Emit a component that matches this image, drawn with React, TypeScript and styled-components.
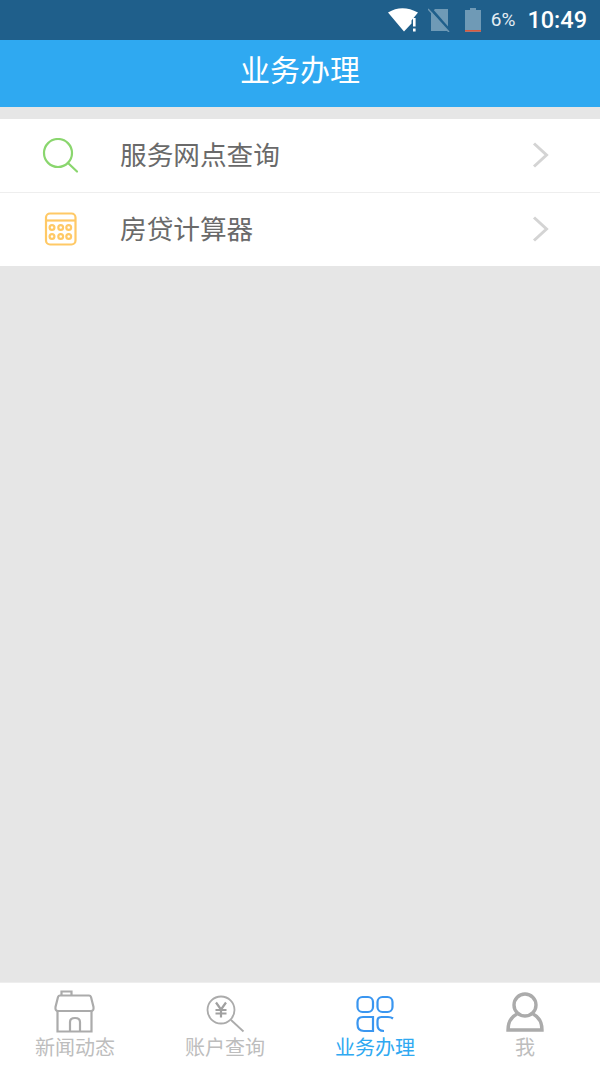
import React from "react";
import styled, { createGlobalStyle } from "styled-components";

const Global = createGlobalStyle`
  html, body { margin: 0; padding: 0; height: 100%; }
  #root { height: 100%; }
  * { box-sizing: border-box; }
`;

const Page = styled.div`
  width: 600px;
  height: 1067px;
  display: flex;
  flex-direction: column;
  background: #e6e6e6;
  font-family: "Noto Sans CJK SC", "Liberation Sans", sans-serif;
  overflow: hidden;
`;

const StatusBar = styled.div`
  height: 40px;
  flex: none;
  background: #1f5f8b;
  display: flex;
  align-items: center;
  justify-content: flex-end;
  padding-right: 13px;
  color: #fff;
  font-family: Roboto, "Liberation Sans", sans-serif;
`;

const StatusIcon = styled.svg<{ $mr: number }>`
  display: block;
  margin-right: ${(p) => p.$mr}px;
  flex: none;
`;

const Percent = styled.span`
  font-size: 19px;
  color: #e4edf3;
  margin-right: 12px;
  line-height: 42px;
`;

const Clock = styled.span`
  font-size: 23.5px;
  font-weight: 500;
  line-height: 42px;
`;

const TitleBar = styled.header`
  height: 67px;
  flex: none;
  background: #2fa9f1;
  display: flex;
  align-items: center;
  justify-content: center;
  color: #fff;
  font-size: 30px;
  line-height: 44px;
  padding-bottom: 12px;
`;

const List = styled.div`
  margin-top: 12px;
  background: #fff;
  flex: none;
`;

const Row = styled.div<{ $h: number; $divider?: boolean }>`
  height: ${(p) => p.$h}px;
  display: flex;
  align-items: center;
  padding-left: 41px;
  padding-right: 50px;
  border-bottom: ${(p) => (p.$divider ? "1px solid #eeeeee" : "none")};
`;

const RowIcon = styled.div`
  width: 79px;
  flex: none;
  display: flex;
  align-items: center;
`;

const RowLabel = styled.span`
  flex: 1;
  font-size: 26.67px;
  color: #6a6a6a;
  line-height: 40px;
  padding-bottom: 4px;
`;

const Spacer = styled.div`
  flex: 1;
`;

const TabBar = styled.nav`
  height: 85px;
  flex: none;
  background: #fff;
  display: grid;
  grid-template-columns: repeat(4, 150px);
  border-top: 1px solid #eeeeee;
`;

const Tab = styled.div<{ $active?: boolean }>`
  display: flex;
  flex-direction: column;
  align-items: center;
  color: ${(p) => (p.$active ? "#2fa9f1" : "#bdbdbd")};
  font-size: 20px;
`;

const TabIconBox = styled.svg`
  display: block;
  flex: none;
  margin-top: 7px;
`;

const TabLabel = styled.span`
  line-height: 26px;
`;

const Chevron = () => (
  <svg width="18" height="28" viewBox="0 0 18 28" fill="none" style={{ marginBottom: 2 }}>
    <path d="M2 2.5 L14.5 14 L2 25.5" stroke="#d4d4d4" strokeWidth="3" />
  </svg>
);

export default function App() {
  return (
    <Page>
      <Global />
      <StatusBar>
        <StatusIcon $mr={10} width="30" height="24" viewBox="0 0 30 24">
          <path d="M0 4.5 Q14 -4 30 4.5 L23.5 12.5 V15.5 L16 23.5 Z" fill="#fff" />
          <rect x="25" y="10" width="2.6" height="8.5" fill="#fff" />
          <rect x="25" y="20.5" width="2.6" height="3" fill="#fff" />
        </StatusIcon>
        <StatusIcon $mr={15} width="22" height="24" viewBox="0 0 22 24">
          <path d="M3 5 L7 1 H20 V23 H3 Z" fill="#6f9ab6" />
          <path d="M2 0 L22 23" stroke="#1f5f8b" strokeWidth="3" />
          <path d="M0 1 L21 24" stroke="#6f9ab6" strokeWidth="1.5" />
        </StatusIcon>
        <StatusIcon $mr={10} width="16" height="24" viewBox="0 0 16 24">
          <path d="M5 0 H11 V2 H16 V24 H0 V2 H5 Z" fill="#6f9ab6" />
          <rect x="0" y="22" width="16" height="1.6" fill="#d9593d" />
        </StatusIcon>
        <Percent>6%</Percent>
        <Clock>10:49</Clock>
      </StatusBar>
      <TitleBar>业务办理</TitleBar>
      <List>
        <Row $h={74} $divider>
          <RowIcon>
            <svg width="38" height="36" viewBox="0 0 38 36" fill="none" stroke="#8ad66e" strokeWidth="2.2">
              <circle cx="17" cy="15" r="14" />
              <path d="M27 25 L36 33.5" strokeLinecap="round" />
            </svg>
          </RowIcon>
          <RowLabel>服务网点查询</RowLabel>
          <Chevron />
        </Row>
        <Row $h={73}>
          <RowIcon>
            <svg width="36" height="36" viewBox="0 0 36 36" fill="none" stroke="#ffc966" strokeWidth="2.2">
              <rect x="5" y="1.5" width="29.5" height="31" rx="4" />
              <path d="M5 8.5 H34.5" />
              <circle cx="11" cy="15.5" r="2.4" />
              <circle cx="19.7" cy="15.5" r="2.4" />
              <circle cx="27.7" cy="15.5" r="2.4" />
              <circle cx="11" cy="24.5" r="2.4" />
              <circle cx="19.7" cy="24.5" r="2.4" />
              <circle cx="27.7" cy="24.5" r="2.4" />
            </svg>
          </RowIcon>
          <RowLabel>房贷计算器</RowLabel>
          <Chevron />
        </Row>
      </List>
      <Spacer />
      <TabBar>
        <Tab>
          <TabIconBox width="44" height="44" viewBox="0 0 44 44" fill="none" stroke="#ababab" strokeWidth="2.2">
            <path d="M7 5.5 H36 Q37.5 5.5 38 7 L40.5 17 Q41 21 38 21 H5 Q2 21 2.5 17 L5 7 Q5.5 5.5 7 5.5 Z" />
            <path d="M4.5 21 V41.5 H38.5 V21" />
            <path d="M8.5 5.5 V1.5 H18.5 V5.5" />
            <path d="M17 41.5 V32 Q17 28 22 28 Q27 28 27 32 V41.5" />
          </TabIconBox>
          <TabLabel>新闻动态</TabLabel>
        </Tab>
        <Tab>
          <TabIconBox width="44" height="44" viewBox="0 0 44 44" fill="none" stroke="#ababab" strokeWidth="1.8">
            <circle cx="18" cy="20" r="13.5" />
            <path d="M28 30 L40.5 41.5" />
            <path d="M13 12.5 L18 19.5 L23 12.5 M12.5 20 H23.5 M12.5 23.5 H23.5 M18 19.5 V27.5" strokeWidth="2.2" stroke="#a0a0a0" />
          </TabIconBox>
          <TabLabel>账户查询</TabLabel>
        </Tab>
        <Tab $active>
          <TabIconBox width="44" height="44" viewBox="0 0 44 44" fill="none" stroke="#3a96f0" strokeWidth="2.2">
            <rect x="4.5" y="7" width="15.5" height="15" rx="5" />
            <rect x="24.5" y="7" width="15" height="15" rx="5" />
            <path d="M10 27 H20 V41 H11 Q4.5 41 4.5 34 V32.5 Q4.5 27 10 27 Z" />
            <path d="M40 28.5 Q38 27 35 27 H28.5 Q24.5 27 24.5 31 V35 Q24.5 41 31 41" />
          </TabIconBox>
          <TabLabel>业务办理</TabLabel>
        </Tab>
        <Tab>
          <TabIconBox width="44" height="44" viewBox="0 0 44 44" fill="none" stroke="#ababab" strokeWidth="3.4">
            <circle cx="22" cy="15" r="11" />
            <path d="M14 24 C8 27 5 33 5 40 H39 C39 33 36 27 30 24" />
          </TabIconBox>
          <TabLabel>我</TabLabel>
        </Tab>
      </TabBar>
    </Page>
  );
}
